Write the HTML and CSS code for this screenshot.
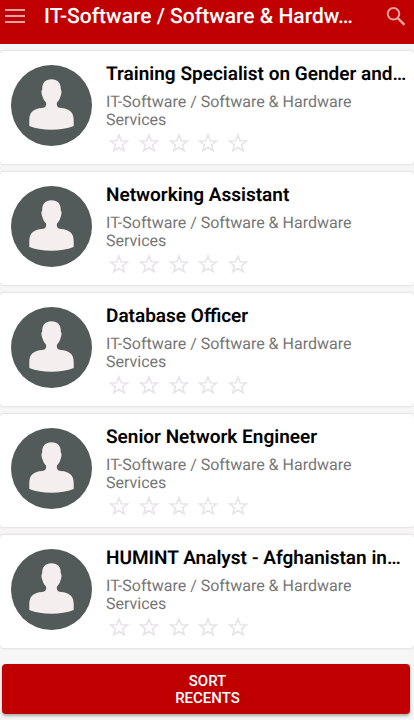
FILE: index.html
```
<!DOCTYPE html>
<html lang="en">
<head>
  <meta charset="UTF-8" />
  <meta name="viewport" content="width=device-width, initial-scale=1.0" />
  <title>IT-Software / Software &amp; Hardware Services</title>
  <link rel="stylesheet" href="styles.css">
</head>
<body>
  <!-- shared icons -->
  <svg class="sprite" aria-hidden="true">
    <symbol id="person" viewBox="0 0 81 81">
      <circle cx="40.5" cy="40.5" r="40.5" fill="#525a5a" />
      <path fill="#f5eeee" d="M40.500 14.200C46.500 14.200 50 17.500 49.800 24.500C51 25.500 50.500 29 49.600 31C49 34 47.500 36 46 37.500C45.300 41 46.500 42.400 50 43C58 43.600 62.700 47 62.700 55V61C56 63.600 49 64.800 40.500 64.800S25 63.600 18.300 61V55C18.300 47 23 43.600 31 43C34.500 42.400 35.700 41 35 37.500C33.500 36 32 34 31.400 31C30.500 29 30 25.500 31.200 24.500C31 17.500 34.500 14.200 40.500 14.200Z" />
    </symbol>
    <symbol id="stars" viewBox="0 0 140 20">
      <g fill="none" stroke="#e6e4e7" stroke-width="1.6">
        <path id="star" d="M10 2L12.200 7.700L18.400 8L13.600 11.900L15.200 17.800L10 14.500L4.800 17.800L6.400 11.900L1.600 8L7.800 7.700Z" />
        <use href="#star" x="30" />
        <use href="#star" x="60" />
        <use href="#star" x="89" />
        <use href="#star" x="119" />
      </g>
    </symbol>
  </svg>

  <header class="toolbar">
    <button class="icon-button" type="button" aria-label="Menu">
      <svg width="20" height="18" viewBox="0 0 20 18"><path d="M0 2H20M0 8H20M0 14H20" stroke="#eda3a3" stroke-width="2" /></svg>
    </button>
    <h1>IT-Software / Software &amp; Hardw…</h1>
    <button class="icon-button" type="button" aria-label="Search">
      <svg width="20" height="20" viewBox="0 0 20 20" fill="none" stroke="#eda3a3" stroke-width="2"><circle cx="7.500" cy="6.800" r="5.800" /><path d="M11.800 11.100L18.500 17.800" stroke-width="2.400" /></svg>
    </button>
  </header>

  <main>
    <ul class="jobs">
      <li class="card">
        <svg class="avatar" aria-hidden="true"><use href="#person" /></svg>
        <div class="info">
          <h2>Training Specialist on Gender and…</h2>
          <p>IT-Software / Software &amp; Hardware Services</p>
          <svg class="rating" role="img" aria-label="0 of 5 stars"><use href="#stars" /></svg>
        </div>
      </li>
      <li class="card">
        <svg class="avatar" aria-hidden="true"><use href="#person" /></svg>
        <div class="info">
          <h2>Networking Assistant</h2>
          <p>IT-Software / Software &amp; Hardware Services</p>
          <svg class="rating" role="img" aria-label="0 of 5 stars"><use href="#stars" /></svg>
        </div>
      </li>
      <li class="card">
        <svg class="avatar" aria-hidden="true"><use href="#person" /></svg>
        <div class="info">
          <h2>Database Officer</h2>
          <p>IT-Software / Software &amp; Hardware Services</p>
          <svg class="rating" role="img" aria-label="0 of 5 stars"><use href="#stars" /></svg>
        </div>
      </li>
      <li class="card">
        <svg class="avatar" aria-hidden="true"><use href="#person" /></svg>
        <div class="info">
          <h2>Senior Network Engineer</h2>
          <p>IT-Software / Software &amp; Hardware Services</p>
          <svg class="rating" role="img" aria-label="0 of 5 stars"><use href="#stars" /></svg>
        </div>
      </li>
      <li class="card">
        <svg class="avatar" aria-hidden="true"><use href="#person" /></svg>
        <div class="info">
          <h2>HUMINT Analyst - Afghanistan in…</h2>
          <p>IT-Software / Software &amp; Hardware Services</p>
          <svg class="rating" role="img" aria-label="0 of 5 stars"><use href="#stars" /></svg>
        </div>
      </li>
    </ul>
    <button class="sort" type="button">SORT<br>RECENTS</button>
  </main>
</body>
</html>
```
FILE: styles.css
```
:root {
  --primary-color: #c00000;
  --bg-color: #f7f6f6;
}

* {
  box-sizing: border-box;
}

body {
  margin: 0;
  font-family: Roboto, sans-serif;
  text-rendering: geometricPrecision;
  background-color: var(--bg-color);
  color: black;
}

h1, h2, p, ul {
  margin: 0;
  padding: 0;
}

.sprite {
  display: none;
}

.toolbar {
  display: flex;
  align-items: center;
  padding: 0 8px 10px 5px;
  background: var(--primary-color);
  color: white;
}

.toolbar h1 {
  flex: 1;
  min-width: 0;
  margin-left: 19px;
  font-size: 21px;
  font-weight: 500;
  line-height: 34px;
  white-space: nowrap;
}

.icon-button {
  display: flex;
  padding: 0;
  border: 0;
  background: none;
  cursor: pointer;
}

.jobs {
  display: flex;
  flex-direction: column;
  gap: 8px;
  padding-top: 7px;
  list-style: none;
}

.card {
  display: flex;
  gap: 14px;
  padding: 11px 8px 11px 11px;
  background: white;
  border-radius: 4px;
  box-shadow: 0 0 2px 1px #e2e0e0;
}

.avatar {
  flex: none;
  width: 81px;
  height: 81px;
  margin-top: 3px;
}

.info {
  flex: 1;
  min-width: 0;
}

.info h2 {
  margin-bottom: 7px;
  font-size: 19px;
  font-weight: 600;
  line-height: 24px;
  white-space: nowrap;
}

.info p {
  max-width: 260px;
  color: #757575;
  font-size: 16px;
  line-height: 18px;
}

.rating {
  display: block;
  width: 140px;
  height: 20px;
  margin: 4px 0 0 3px;
}

.sort {
  display: block;
  width: calc(100% - 6px);
  margin: 16px 4px 7px 2px;
  padding: 9px 8px 7px 11px;
  border: 0;
  border-radius: 4px;
  background: var(--primary-color);
  color: white;
  box-shadow: 0 2px 3px #aaaea8;
  font-family: inherit;
  font-size: 15px;
  font-weight: 500;
  line-height: 17px;
  cursor: pointer;
}
```
